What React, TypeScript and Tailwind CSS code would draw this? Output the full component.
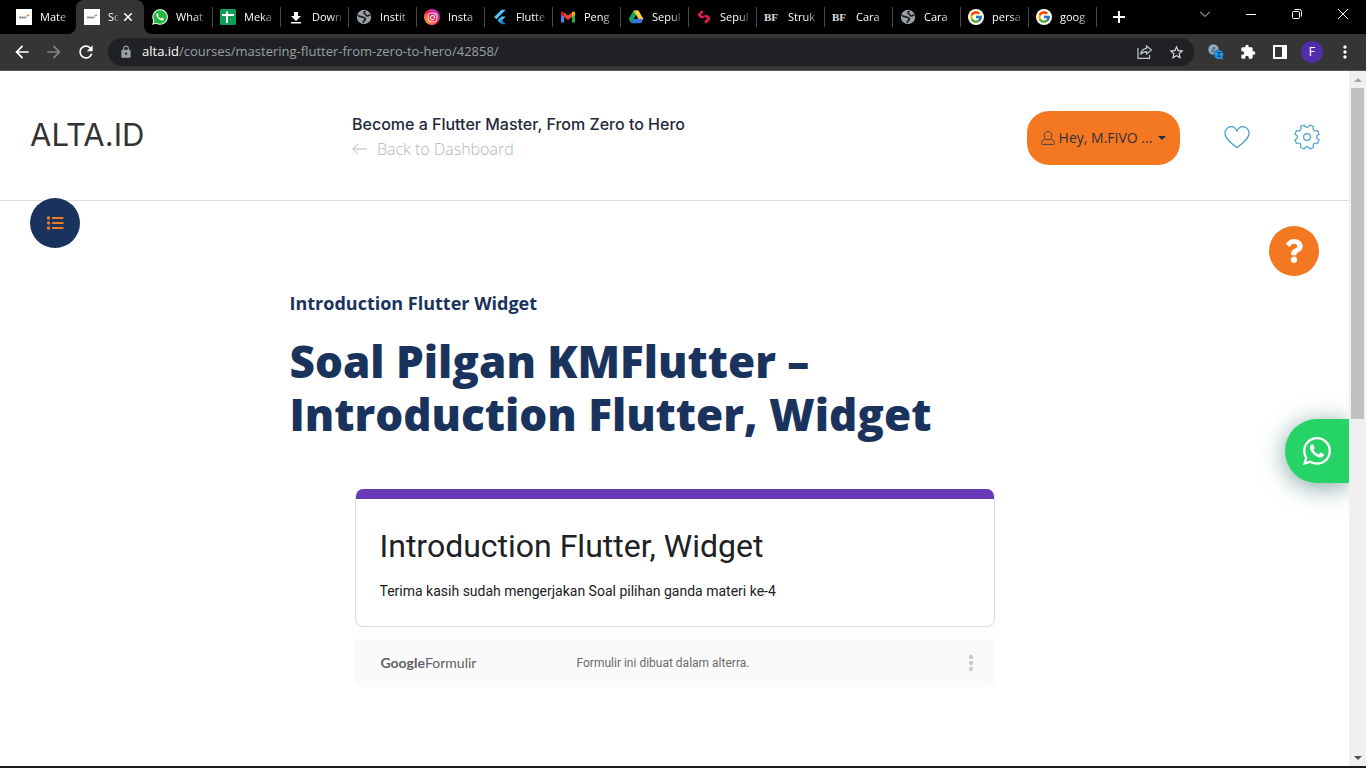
import React from 'react';
import { FaInstagram, FaQuestion, FaWhatsapp } from 'react-icons/fa';
import { FcGoogle } from 'react-icons/fc';
import {
  MdArrowBack,
  MdArrowForward,
  MdExtension,
  MdLock,
  MdMoreVert,
  MdRefresh,
  MdStarBorder,
} from 'react-icons/md';

function AltaIcon() {
  return (
    <svg viewBox="0 0 16 16" className="size-4 shrink-0">
      <rect width="16" height="16" fill="#fff" />
      <path d="M3 8.500h7.500" stroke="#9a9fb0" strokeWidth="1.600" />
      <path d="M3.500 8.500h1M6 8.500h1M8.500 8.500h1" stroke="#6b7290" strokeWidth="1.600" />
      <path d="M10.800 7.200l2-1.400" stroke="#f47721" strokeWidth="1.600" />
    </svg>
  );
}

function WhatsAppTabIcon() {
  return (
    <svg viewBox="0 0 16 16" className="size-4 shrink-0">
      <path d="M.2 15.8l1.1-4A7.8 7.8 0 1 1 4.300 14.800z" fill="#fff" />
      <path d="M1.600 14.400l.8-2.800A6.800 6.800 0 1 1 4.500 13.700z" fill="#1fb83c" />
      <path
        d="M5.500 4.200c-.4 0-1.200.6-1.200 1.800 0 2.100 3.300 5.300 5.500 5.500 1.200 0 2-.7 2-1.600 0-.3-.1-.4-.3-.5l-1.500-.7c-.3-.1-.4 0-.6.2l-.6.7c-1-.2-2.500-1.600-2.800-2.600l.5-.6c.1-.2.100-.3 0-.5l-.6-1.400c-.1-.2-.2-.3-.4-.3z"
        fill="#fff"
      />
    </svg>
  );
}

function SheetsIcon() {
  return (
    <svg viewBox="0 0 16 16" className="size-4 shrink-0">
      <rect width="16" height="16" rx="1.500" fill="#0f9d58" />
      <path d="M2 6h12M7 2.500v11.500" stroke="#fff" strokeWidth="2" />
    </svg>
  );
}

function DownloadIcon() {
  return (
    <svg viewBox="0 0 16 16" className="size-4 shrink-0" fill="#fff">
      <path d="M6 3h4v4h3l-5 5-5-5h3zM3 13h10v1.600H3z" />
    </svg>
  );
}

function GlobeIcon() {
  return (
    <svg viewBox="0 0 16 16" className="size-4 shrink-0">
      <circle cx="8" cy="8" r="7.200" fill="#9aa0a6" />
      <path
        d="M2.200 6.500c1.300 1.500 3.300.8 4.600 1.700 1 .8 2.600.4 2.600 1.700 0 1.400-1.700 1.200-2 3.400M9 2.300C7.500 3 7.700 4.300 8.800 4.700c1.400.4.8 2 2.300 2.300 1 .2 1.600-.6 2.500-.8"
        fill="none"
        stroke="#1b1c1e"
        strokeWidth="1.700"
        strokeLinecap="round"
      />
    </svg>
  );
}

function InstagramTabIcon() {
  return (
    <span className="flex size-4 shrink-0 items-center justify-center rounded-full bg-linear-to-tr from-[#ffb700] via-[#f7164f] to-[#a000e0]">
      <FaInstagram className="size-[11px] text-white" />
    </span>
  );
}

function FlutterIcon() {
  return (
    <svg viewBox="0 0 16 16" className="size-4 shrink-0">
      <path d="M9.500.8h4.300L4.300 10.200 2.100 8z" fill="#54c5f8" />
      <path d="M9.500 7.600h4.300l-3.700 3.700-2.200 2.200-2.200-2.200z" fill="#54c5f8" />
      <path d="M7.900 9.100l2.200 2.200 3.700 3.900H9.500l-3.800-3.900z" fill="#1b75c9" />
      <path d="M5.700 11.300l2.200-2.200 2.200 2.200-2.200 2.200z" fill="#29b6f6" />
    </svg>
  );
}

function GmailIcon() {
  return (
    <svg viewBox="0 0 16 16" className="size-4 shrink-0">
      <path d="M1 4v9.500h3V6z" fill="#4285f4" />
      <path d="M12 6v7.500h3V4z" fill="#34a853" />
      <path d="M12 3.500V8l3-2.200V4c0-1.500-1.500-2-2.500-1.200z" fill="#fbbc04" />
      <path d="M4 3.600l4 3 4-3V8l-4 3-4-3z" fill="#ea4335" />
      <path d="M1 4v1.800L4 8V3.600l-.8-.7C2.200 2.200 1 2.800 1 4z" fill="#c5221f" />
    </svg>
  );
}

function DriveIcon() {
  return (
    <svg viewBox="0 0 16 16" className="size-4 shrink-0">
      <path d="M5.500 1.500h5L8 6 3.200 14.300.7 10z" fill="#11a861" />
      <path d="M5.500 1.500h5L15.500 10h-5z" fill="#ffcf48" />
      <path d="M5.700 10h9.800L13 14.300H3.200z" fill="#3777e3" />
    </svg>
  );
}

function SepulsaIcon() {
  return (
    <svg viewBox="0 0 16 16" className="size-4 shrink-0" fill="none" stroke="#e31b50" strokeWidth="2.600" strokeLinejoin="round" strokeLinecap="round">
      <path d="M6 2.800L3 5.800 5 7.800 6.800 8" />
      <path d="M9.500 7.200l1.600.3 2 2L9.800 13" />
    </svg>
  );
}

function BfIcon() {
  return (
    <span className="flex size-4 shrink-0 items-center font-['Liberation_Serif',serif] text-[11px] font-bold text-[#ddd]">BF</span>
  );
}

function GoogleIcon() {
  return (
    <span className="flex size-4 shrink-0 items-center justify-center rounded-full bg-white">
      <FcGoogle className="size-[14px]" />
    </span>
  );
}

type Tab = { title: string; icon: () => React.JSX.Element };

const TABS: Tab[] = [
  { title: 'Mate', icon: AltaIcon },
  { title: 'So', icon: AltaIcon },
  { title: 'What', icon: WhatsAppTabIcon },
  { title: 'Meka', icon: SheetsIcon },
  { title: 'Down', icon: DownloadIcon },
  { title: 'Instit', icon: GlobeIcon },
  { title: 'Insta', icon: InstagramTabIcon },
  { title: 'Flutte', icon: FlutterIcon },
  { title: 'Peng', icon: GmailIcon },
  { title: 'Sepul', icon: DriveIcon },
  { title: 'Sepul', icon: SepulsaIcon },
  { title: 'Struk', icon: BfIcon },
  { title: 'Cara', icon: BfIcon },
  { title: 'Cara', icon: GlobeIcon },
  { title: 'persa', icon: GoogleIcon },
  { title: 'goog', icon: GoogleIcon },
];

function TabStrip() {
  return (
    <div className="flex h-[34px] bg-black pl-2">
      {TABS.map((tab, i) => {
        const Icon = tab.icon;
        const active = i === 1;
        return (
          <div key={i} className={active ? 'relative flex w-[68px] items-center rounded-t-lg bg-[#353535] px-2' : 'relative flex w-[68px] items-center pl-2'}>
            {i > 2 && <span className="absolute left-0 h-5 w-px bg-[#4a4a4a]" />}
            {active && (
              <>
                <svg viewBox="0 0 8 8" className="absolute bottom-0 -left-2 size-2" fill="#353535">
                  <path d="M8 0v8H0a8 8 0 0 0 8-8z" />
                </svg>
                <svg viewBox="0 0 8 8" className="absolute -right-2 bottom-0 size-2" fill="#353535">
                  <path d="M0 0v8h8a8 8 0 0 1-8-8z" />
                </svg>
              </>
            )}
            <button className="flex min-w-0 flex-1 items-center gap-2 text-left">
              <Icon />
              <span
                className={
                  active
                    ? 'flex-1 overflow-hidden text-[11px] leading-4 whitespace-nowrap text-white [mask-image:linear-gradient(to_right,black_50%,transparent)]'
                    : 'flex-1 text-[11px] leading-4 whitespace-nowrap text-white [mask-image:linear-gradient(to_right,black_50%,transparent_90%)]'
                }
              >
                {tab.title}
              </span>
            </button>
            {active && (
              <button aria-label="Close tab" className="flex w-[17px] items-center justify-center">
                <svg viewBox="0 0 8 8" className="size-2" stroke="#fff" strokeWidth="1.500">
                  <path d="M0 0l8 8M8 0L0 8" />
                </svg>
              </button>
            )}
          </div>
        );
      })}
      <span className="h-5 w-px self-center bg-[#4a4a4a]" />
      <button aria-label="New tab" className="ml-4 flex items-center">
        <svg viewBox="0 0 12 12" className="size-3" stroke="#fff" strokeWidth="2">
          <path d="M6 0v12M0 6h12" />
        </svg>
      </button>
      <div className="ml-auto flex items-center pb-[6px]">
        <button aria-label="Search tabs" className="flex w-[46px] justify-center">
          <svg viewBox="0 0 10 6" className="h-[6px] w-[10px]" fill="none" stroke="#ddd">
            <path d="M0 .5l5 5 5-5" />
          </svg>
        </button>
        <button aria-label="Minimize" className="flex w-[46px] justify-center">
          <svg viewBox="0 0 10 10" className="size-[10px]" stroke="#fff">
            <path d="M0 5.500h10" />
          </svg>
        </button>
        <button aria-label="Restore" className="flex w-[46px] justify-center">
          <svg viewBox="0 0 10 10" className="size-[10px]" fill="none" stroke="#fff">
            <rect x=".5" y="2.500" width="7" height="7" rx="1" />
            <path d="M2.500.5h5a2 2 0 0 1 2 2v5" />
          </svg>
        </button>
        <button aria-label="Close" className="flex w-[46px] justify-center">
          <svg viewBox="0 0 10 10" className="size-[10px]" stroke="#fff">
            <path d="M0 0l10 10M10 0L0 10" />
          </svg>
        </button>
      </div>
    </div>
  );
}

function Toolbar() {
  return (
    <div className="flex h-[37px] items-center border-b border-[#5a5759] bg-[#353535] pl-3 text-white">
      <button aria-label="Back"><MdArrowBack className="size-5" /></button>
      <button aria-label="Forward" className="ml-3 text-[#868686]"><MdArrowForward className="size-5" /></button>
      <button aria-label="Reload" className="ml-3"><MdRefresh className="size-5" /></button>
      <div className="ml-3 flex h-7 flex-1 items-center rounded-full bg-[#202124] pr-2 pl-[11px]">
        <MdLock className="size-[14px] text-[#9aa0a6]" />
        <div className="ml-[9px] flex-1 text-[13px] whitespace-nowrap text-[#9aa0a6]">
          <span className="text-white">alta.id</span>/courses/mastering-flutter-from-zero-to-hero/42858/
        </div>
        <button aria-label="Share this page" className="flex w-8 justify-center">
          <svg viewBox="0 0 16 14" className="h-[14px] w-4" fill="none" stroke="#c4c7ca" strokeWidth="1.200">
            <path d="M1 3v10.300h11.500V10" />
            <path d="M9.500 1l5 4-5 4V6.600C6.500 6.500 5 7.500 3.700 9.500 4 6 6 3.800 9.500 3.400z" />
          </svg>
        </button>
        <button aria-label="Bookmark this tab" className="ml-[5px] flex w-5 justify-center"><MdStarBorder className="size-[17px] text-[#dadce0]" /></button>
      </div>
      <button aria-label="Translate extension" className="ml-3 flex w-5 justify-center">
        <svg viewBox="0 0 16 16" className="size-4" fill="none">
          <circle cx="5.500" cy="5.500" r="5.200" fill="#8fa9bd" />
          <path d="M3.500 8.500L6 3l1 2.500M4.500 7h2" stroke="#435b70" />
          <path d="M6 10.500a4.700 4.700 0 1 1 8.600 2.600l.8 2.400-2.700-.6A4.700 4.700 0 0 1 6 10.500z" fill="#1e96ee" stroke="#353535" strokeWidth=".5" />
          <path d="M9 8.500h4M9 12.300h4M11 8.500v3.500" stroke="#123d6b" />
        </svg>
      </button>
      <button aria-label="Extensions" className="ml-3 flex w-5 justify-center"><MdExtension className="size-4" /></button>
      <button aria-label="Side panel" className="ml-3 flex w-5 justify-center">
        <svg viewBox="0 0 14 14" className="size-[14px]">
          <path d="M0 0h14v14H0zM2 2v10h7V2z" fill="#fff" fillRule="evenodd" />
        </svg>
      </button>
      <button aria-label="Profile" className="ml-[11px] flex size-[22px] items-center justify-center rounded-full bg-[#512da8] font-['Roboto',sans-serif] text-xs">F</button>
      <button aria-label="Menu" className="mr-[11px] ml-3 flex w-5 justify-center"><MdMoreVert className="size-5" /></button>
    </div>
  );
}

function UserIcon() {
  return (
    <svg viewBox="0 0 14 14" className="size-[14px]" fill="none" stroke="#4b3d4a" strokeWidth="1">
      <path d="M7 .6c2.300 0 3.700 1.700 3.700 3.900S9.300 8.800 7 8.800 3.300 6.700 3.300 4.500 4.700.6 7 .6z" />
      <path d="M4.500 8.300C2 9 .6 10 .6 12.600c0 .6.3.8.8.8h11.200c.5 0 .8-.2.8-.8 0-2.600-1.400-3.600-3.900-4.300" />
    </svg>
  );
}

function gearPath(teeth: number, outer: number, inner: number) {
  const point = (deg: number, r: number) => {
    const a = (deg * Math.PI) / 180;
    return `${(13 + r * Math.cos(a)).toFixed(2)} ${(13 + r * Math.sin(a)).toFixed(2)}`;
  };
  const step = 360 / teeth;
  let d = '';
  for (let i = 0; i < teeth; i++) {
    const a = step * (i + 0.5);
    d += `${i === 0 ? 'M' : 'L'}${point(a - 9, outer)}L${point(a + 9, outer)}`;
    d += `C${point(a + 12, inner)} ${point(a + step - 12, inner)} ${point(a + step - 9, outer)}`;
  }
  return d + 'Z';
}

function PageHeader() {
  return (
    <header className="flex h-[130px] shrink-0 items-start border-b border-[#dcdcdc] pt-10 pr-[29px] pl-[30px]">
      <a href="#home" className="w-[322px] pt-1 font-['Inter',sans-serif] text-[31px] leading-10 text-[#333]">ALTA.ID</a>
      <div className="pt-px">
        <p className="font-['Inter',sans-serif] text-base leading-6 font-medium text-[#1f2a3c]">Become a Flutter Master, From Zero to Hero</p>
        <a href="#dashboard" className="flex items-center gap-[10px] text-base leading-[26px] font-light text-[#b3b5bd]">
          <svg viewBox="0 0 15 12" className="h-3 w-[15px]" fill="none" stroke="currentColor">
            <path d="M15 6H.8M6 .8L.8 6 6 11.200" />
          </svg>
          Back to Dashboard
        </a>
      </div>
      <button className="ml-auto flex h-[54px] w-[153px] items-center justify-center gap-1 rounded-[22px] bg-[#f47721] text-sm text-[#332f3d]">
        <UserIcon />
        <span>Hey, M.FIVO ...</span>
        <svg viewBox="0 0 8 4" className="ml-[2px] h-1 w-2" fill="#242b45">
          <path d="M0 0h8L4 4z" />
        </svg>
      </button>
      <button aria-label="Wishlist" className="mt-[13px] ml-11 flex">
        <svg viewBox="0 0 26 26" className="size-[26px]" fill="none" stroke="#4a9fd0" strokeWidth="1.200">
          <path d="M13 7.200C11.500 3.800 9.500 2.700 7.300 2.700 3.600 2.700 1 5.600 1 9.200c0 5.500 6.500 10.300 12 14.400 5.500-4.100 12-8.900 12-14.400 0-3.600-2.600-6.500-6.300-6.500-2.200 0-4.200 1.100-5.700 4.500z" />
        </svg>
      </button>
      <button aria-label="Settings" className="mt-[13px] ml-11 flex">
        <svg viewBox="0 0 26 26" className="size-[26px]" fill="none" stroke="#4a9fd0" strokeWidth="1.200" strokeLinejoin="round">
          <path d={gearPath(8, 12.4, 8.9)} />
          <circle cx="13" cy="13" r="3.400" />
        </svg>
      </button>
    </header>
  );
}

function FormCard() {
  return (
    <div className="mx-auto mt-12 w-full max-w-[640px] font-['Roboto',sans-serif]">
      <section className="overflow-hidden rounded-lg border border-t-0 border-[#dadce0] bg-white">
        <div className="-mx-px h-[10px] bg-[#673ab7]" />
        <div className="px-6 pt-[25px] pb-6">
          <h2 className="text-[32px] leading-[44px] text-[#202124]">Introduction Flutter, Widget</h2>
          <p className="mt-3 text-sm leading-[22px] text-[#202124]">Terima kasih sudah mengerjakan Soal pilihan ganda materi ke-4</p>
        </div>
      </section>
      <footer className="mt-3 flex h-12 items-center rounded-b-lg bg-[#fafafa] pr-[21px] pl-[26px]">
        <a href="#forms" className="w-[196px] font-['Lato',sans-serif] text-sm text-[#5f6063]">
          <span className="font-bold">Google</span>Formulir
        </a>
        <p className="text-xs text-[#6b6b6b]">Formulir ini dibuat dalam alterra.</p>
        <button aria-label="More options" className="ml-auto flex">
          <svg viewBox="0 0 6 18" className="h-[18px] w-[6px]" fill="#cacaca">
            <circle cx="3" cy="3" r="2.200" />
            <circle cx="3" cy="9" r="2.200" />
            <circle cx="3" cy="15" r="2.200" />
          </svg>
        </button>
      </footer>
    </div>
  );
}

function Scrollbar() {
  return (
    <div className="flex w-[17px] shrink-0 flex-col items-center bg-[#f0f0f0]">
      <div className="flex h-[17px] items-center">
        <svg viewBox="0 0 8 4" className="h-1 w-2" fill="#a3a3a3"><path d="M4 0l4 4H0z" /></svg>
      </div>
      <div className="flex w-full flex-1 flex-col items-center">
        <div className="h-1/2 w-[13px] bg-[#c1c1c1]" />
      </div>
      <div className="flex h-[17px] items-center">
        <svg viewBox="0 0 8 4" className="h-1 w-2" fill="#505050"><path d="M4 4L0 0h8z" /></svg>
      </div>
    </div>
  );
}

export default function App() {
  return (
    <div className="flex h-screen flex-col overflow-hidden bg-[#1c1b1f] font-['Open_Sans',sans-serif]">
      <TabStrip />
      <Toolbar />
      <div className="mb-[2px] flex min-h-0 flex-1">
        <div className="relative flex-1 overflow-hidden bg-white">
          <PageHeader />
          <main className="mx-auto w-full max-w-[770px] pt-[90px]">
            <p className="text-lg leading-6 font-bold text-[#19335d]">Introduction Flutter Widget</p>
            <h1 className="mt-5 text-[44px] leading-[53px] font-extrabold text-[#19335d]">
              Soal Pilgan KMFlutter – <br />
              Introduction Flutter, Widget
            </h1>
            <FormCard />
          </main>
          <button aria-label="Course contents" className="absolute top-[127px] left-[30px] flex size-[50px] items-center justify-center rounded-full bg-[#19335d]">
            <svg viewBox="0 0 18 14" className="h-[14px] w-[18px]" fill="#f47721">
              <path d="M6 1h11.500v2H6zM6 6h11.500v2H6zM6 11h11.500v2H6z" />
              <circle cx="2.500" cy="2" r="1.700" />
              <circle cx="2.500" cy="7" r="1.700" />
              <circle cx="2.500" cy="12" r="1.700" />
            </svg>
          </button>
          <button aria-label="Help" className="absolute top-[155px] right-[30px] flex size-[50px] items-center justify-center rounded-full bg-[#f47721] text-white">
            <FaQuestion className="size-6" />
          </button>
          <a href="#whatsapp" aria-label="WhatsApp" className="absolute top-1/2 right-0 flex size-16 items-center justify-center rounded-l-full bg-[#25d366] text-white shadow-[0_4px_24px_rgba(0,77,77,0.5)]">
            <FaWhatsapp className="size-8" />
          </a>
        </div>
        <Scrollbar />
      </div>
    </div>
  );
}
